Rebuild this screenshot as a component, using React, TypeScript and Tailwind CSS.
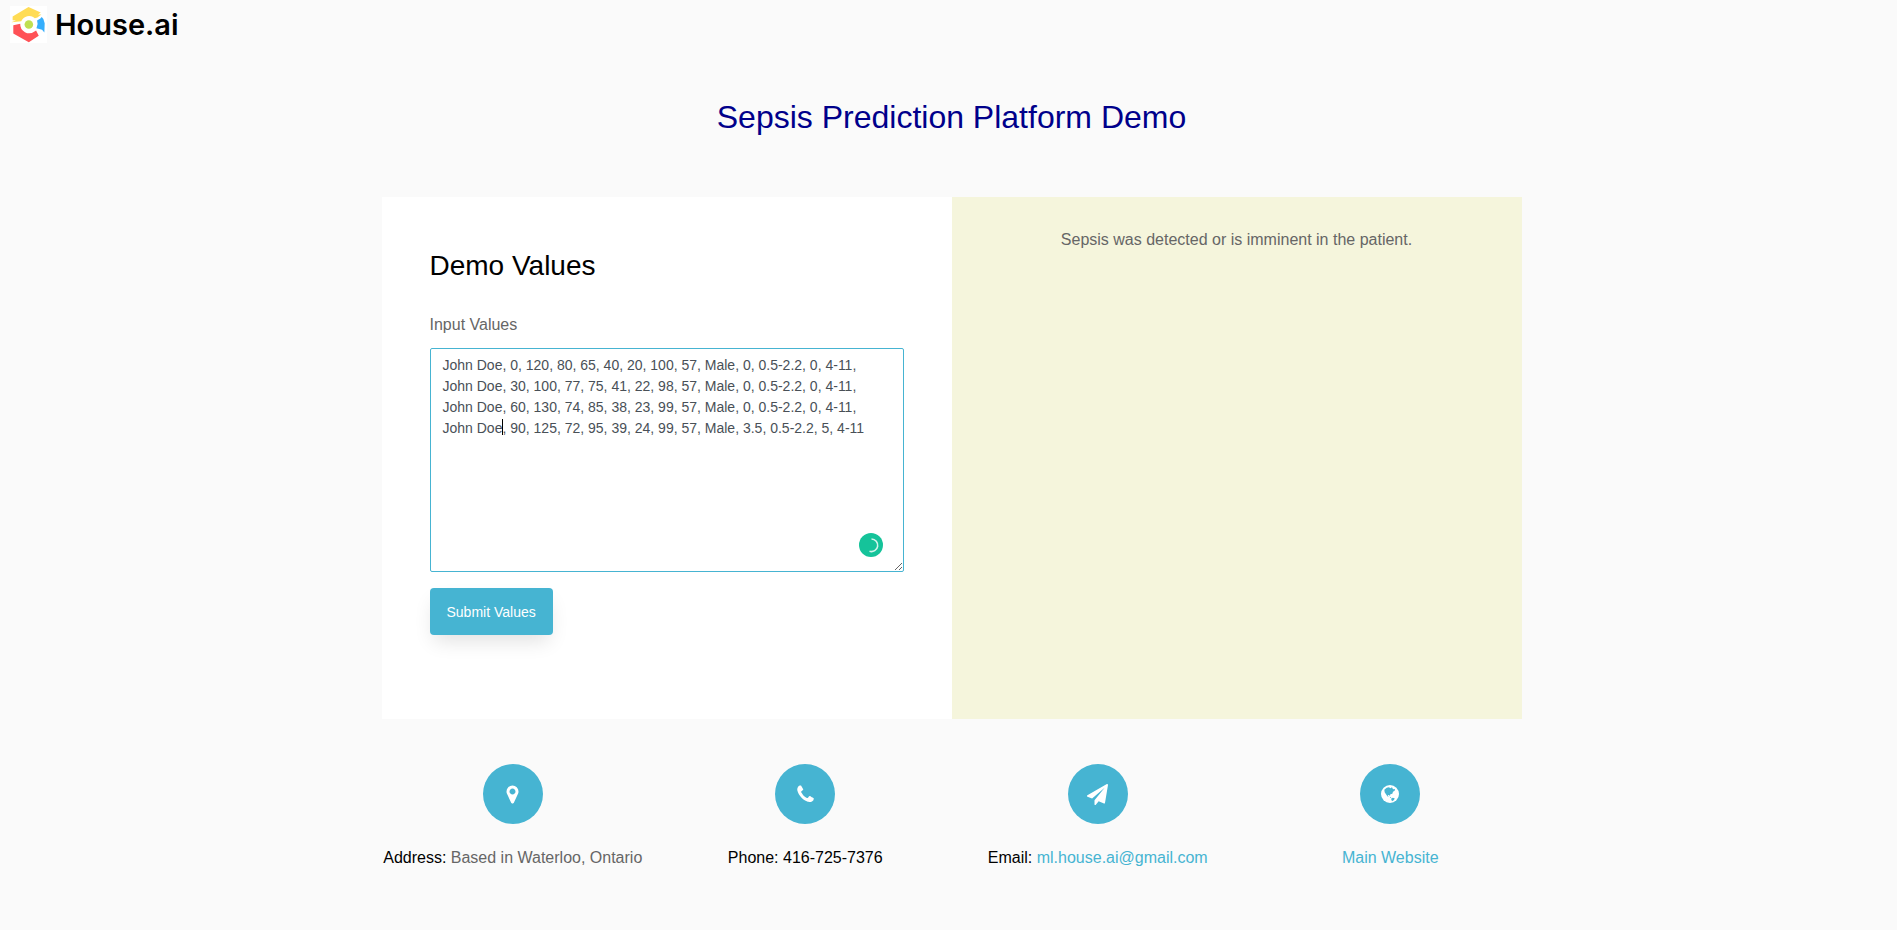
import { useState, type ReactNode } from "react";

const SAMPLE_ROWS = [
  "John Doe, 0, 120, 80, 65, 40, 20, 100, 57, Male, 0, 0.5-2.2, 0, 4-11,",
  "John Doe, 30, 100, 77, 75, 41, 22, 98, 57, Male, 0, 0.5-2.2, 0, 4-11,",
  "John Doe, 60, 130, 74, 85, 38, 23, 99, 57, Male, 0, 0.5-2.2, 0, 4-11,",
  "John Doe, 90, 125, 72, 95, 39, 24, 99, 57, Male, 3.5, 0.5-2.2, 5, 4-11",
];

function LogoMark() {
  return (
    <svg viewBox="0 0 112 112" className="size-[37px] bg-white" aria-hidden="true">
      <path d="M8 32 56 3l37 17-8 6 10 0-12 9-8 2A26 26 0 0 0 34 46L4 49 18 44 8 43z" fill="#ffdc55" />
      <path d="M10 58 31 54A27 27 0 0 0 74 77L79 74 87 90 57 110 10 83z" fill="#ff5257" />
      <path d="M82 44 92 38 96 33 101 39 105 52 104 80 97 72 80 67A27 27 0 0 0 82 44z" fill="#35aefc" />
      <circle cx="57" cy="56" r="13" fill="#bfdf52" />
    </svg>
  );
}

function MarkerIcon() {
  return (
    <svg viewBox="0 0 1792 1792" className="size-[21px] fill-white" aria-hidden="true">
      <path d="M1152 640q0-106-75-181t-181-75-181 75-75 181 75 181 181 75 181-75 75-181zm256 0q0 109-33 179l-364 774q-16 33-47.5 52t-67.5 19-67.5-19-46.5-52l-365-774q-33-70-33-179 0-212 150-362t362-150 362 150 150 362z" />
    </svg>
  );
}

function PhoneIcon() {
  return (
    <svg viewBox="0 0 1792 1792" className="size-[21px] fill-white" aria-hidden="true">
      <path d="M1600 1240q0 27-10 70.5t-21 68.5q-21 50-122 106-94 51-186 51-27 0-53-3.5t-57.5-12.5-47-14.5-55.5-20.5-49-18q-98-35-175-83-127-79-264-216t-216-264q-48-77-83-175-3-9-18-49t-20.5-55.5-14.5-47-12.5-57.5-3.5-53q0-92 51-186 56-101 106-122 25-11 68.5-21t70.5-10q14 0 21 3 18 6 53 76 11 19 30 54t35 63.5 31 53.5q3 4 17.5 25t21.5 35.5 7 28.5q0 20-28.5 50t-62 55-62 53-28.5 46q0 9 5 22.5t8.5 20.5 14 24 11.5 19q76 137 174 235t235 174q2 1 19 11.5t24 14 20.5 8.5 22.5 5q18 0 46-28.5t53-62 55-62 50-28.5q14 0 28.5 7t35.5 21.5 25 17.5q25 15 53.5 31t63.5 35 54 30q70 35 76 53 3 7 3 21z" />
    </svg>
  );
}

function PlaneIcon() {
  return (
    <svg viewBox="0 0 1792 1792" className="size-[21px] fill-white" aria-hidden="true">
      <path d="M1764 11q33 24 27 64l-256 1536q-5 29-32 45-14 8-31 8-11 0-24-5l-453-185-242 295q-18 23-49 23-13 0-22-4-19-7-30.5-23.5t-11.5-36.5v-349l864-1059-1069 925-395-162q-37-14-40-55-2-40 32-59l1664-960q15-9 32-9 20 0 36 11z" />
    </svg>
  );
}

function GlobeIcon() {
  return (
    <svg viewBox="0 0 54 54" className="size-[18px]" aria-hidden="true">
      <circle cx="27" cy="27" r="27" fill="#fff" />
      <path
        d="M10 14 17 8 24 7 28 10 33 7 36 13 42 12 41 17 36 20 34 26 28 28 27 33 24 30 20 31 23 36 19 34 15 28 11 22z M30 41 35 38 41 40 39 45 33 49z M26 35 31 37 28 39z"
        fill="#46b4d2"
      />
    </svg>
  );
}

function Contact({ icon, children }: { icon: ReactNode; children: ReactNode }) {
  return (
    <div className="flex flex-col items-center text-center">
      <div className="mb-5 flex size-[60px] items-center justify-center rounded-full bg-[#46b4d2]">{icon}</div>
      <p className="leading-7">{children}</p>
    </div>
  );
}

export default function App() {
  const [values, setValues] = useState(SAMPLE_ROWS.join("\n"));
  const [touched, setTouched] = useState(false);

  return (
    <div className="min-h-screen bg-[#fafafa] pl-[6px] font-['Liberation_Sans',Arial,sans-serif] text-base text-[#666]">
      <header className="flex h-12 items-center">
        <a href="#home" className="ml-1 flex items-center gap-2 text-black">
          <LogoMark />
          <span className="pt-[2px] font-['Inter',sans-serif] text-[29px] leading-9 font-semibold">House.ai</span>
        </a>
      </header>

      <main className="mx-auto max-w-[1170px] px-[15px]">
        <h1 className="pt-[45px] pb-[56px] text-center text-[32px] leading-[48px] text-[#00008b]">
          Sepsis Prediction Platform Demo
        </h1>

        <section className="grid min-h-[522px] grid-cols-2">
          <form className="bg-white p-12" onSubmit={(event) => event.preventDefault()}>
            <h2 className="mb-6 text-[28px] leading-[42px] text-black">Demo Values</h2>
            <label htmlFor="values" className="mb-[10px] block leading-[27px]">
              Input Values
            </label>
            <div className="relative">
              <textarea
                id="values"
                value={values}
                onFocus={() => setTouched(true)}
                onChange={(event) => setValues(event.target.value)}
                spellCheck={false}
                className="block h-56 w-full resize-y rounded-xs border border-[#46b4d2] bg-white px-3 py-[6px] text-sm leading-[21px] text-[#495057] outline-none"
              />
              {!touched && <span className="pointer-events-none absolute top-[71px] left-[72px] h-4 w-px bg-black" />}
              <svg viewBox="0 0 24 24" className="absolute right-[21px] bottom-[15px] size-6" aria-hidden="true">
                <circle cx="12" cy="12" r="12" fill="#15c39a" />
                <path d="M12.500 6a6.300 6.300 0 1 1-2 12.300" fill="none" stroke="#d5f4ec" strokeWidth="1.600" />
              </svg>
            </div>
            <button
              type="submit"
              className="mt-4 h-[47px] cursor-pointer rounded bg-[#46b4d2] px-[17px] text-sm text-white shadow-[0_10px_20px_-4px_rgba(0,0,0,0.12)]"
            >
              Submit Values
            </button>
          </form>
          <div className="bg-[#f5f5dc] px-4 pt-7 text-center">
            <p className="leading-[29px]">Sepsis was detected or is imminent in the patient.</p>
          </div>
        </section>
      </main>

      <footer className="mx-auto mt-[45px] grid max-w-[1170px] grid-cols-4 pb-14">
        <Contact icon={<MarkerIcon />}>
          <span className="text-black">Address:</span> Based in Waterloo, Ontario
        </Contact>
        <Contact icon={<PhoneIcon />}>
          <span className="text-black">Phone: </span>
          <a href="tel:4167257376" className="text-black">
            416-725-7376
          </a>
        </Contact>
        <Contact icon={<PlaneIcon />}>
          <span className="text-black">Email:</span>{" "}
          <a href="mailto:ml.house.ai@gmail.com" className="text-[#46b4d2]">
            ml.house.ai@gmail.com
          </a>
        </Contact>
        <Contact icon={<GlobeIcon />}>
          <a href="#main" className="text-[#46b4d2]">
            Main Website
          </a>
        </Contact>
      </footer>
    </div>
  );
}
